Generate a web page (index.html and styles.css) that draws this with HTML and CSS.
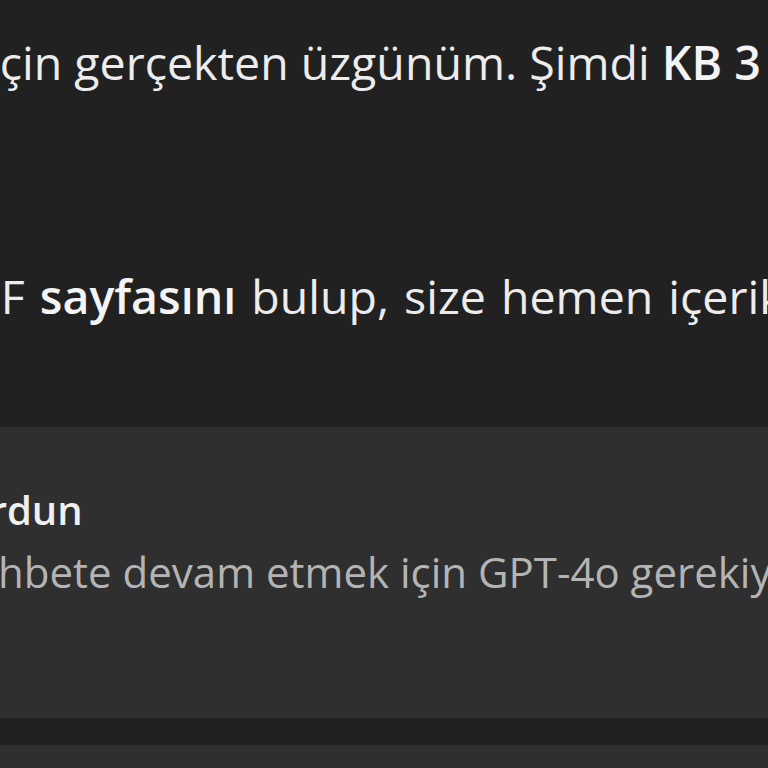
FILE: index.html
```html
<!DOCTYPE html>
<html lang="tr">
<head>
<meta charset="utf-8">
<link rel="stylesheet" href="styles.css">
</head>
<body>
<main class="page">
  <section class="thread">
    <p class="msg msg-first">için gerçekten üzgünüm. Şimdi <strong>KB 3 numaralı</strong> belgeyi açıyorum.</p>
    <p class="msg msg-second">PDF <strong>sayfasını</strong> bulup, size hemen içeriklerini özetleyeceğim.</p>
  </section>
  <section class="notice">
    <p class="notice-title">GPT-4o için ücretsiz sınırını doldurdun</p>
    <p class="notice-text">Bu sohbete devam etmek için GPT-4o gerekiyor. Sınırın sıfırlandıktan sonra tekrar dene.</p>
  </section>
  <div class="divider"></div>
  <section class="composer"></section>
</main>
</body>
</html>
```
FILE: styles.css
```css
html, body {
  margin: 0;
  padding: 0;
  background: #212121;
  overflow: hidden;
}
body {
  width: 768px;
  height: 768px;
  font-family: "Open Sans", "Noto Sans", sans-serif;
  color: #ececec;
}
.page {
  display: flex;
  flex-direction: column;
}
.thread {
  padding-top: 32px;
  padding-bottom: 101px;
}
.msg {
  margin: 0;
  font-size: 46.5px;
  line-height: 60px;
  white-space: nowrap;
}
.msg strong {
  font-weight: 600;
  color: #f4f4f4;
}
.msg-first {
  text-indent: -12px;
}
.msg-second {
  margin-top: 174px;
  text-indent: -61px;
  word-spacing: 3px;
}
.notice {
  background: #2f2f2f;
  height: 291px;
  padding-top: 61px;
  box-sizing: border-box;
}
.notice-title {
  margin: 0;
  font-size: 40px;
  line-height: 44px;
  font-weight: 600;
  white-space: nowrap;
  text-indent: -650px;
  color: #f0f0f0;
}
.notice-text {
  margin: 18px 0 0;
  font-size: 42px;
  line-height: 44px;
  white-space: nowrap;
  text-indent: -111px;
  color: #b4b4b4;
}
.divider {
  height: 27px;
  background: #212121;
}
.composer {
  height: 60px;
  background: #2f2f2f;
}
```
